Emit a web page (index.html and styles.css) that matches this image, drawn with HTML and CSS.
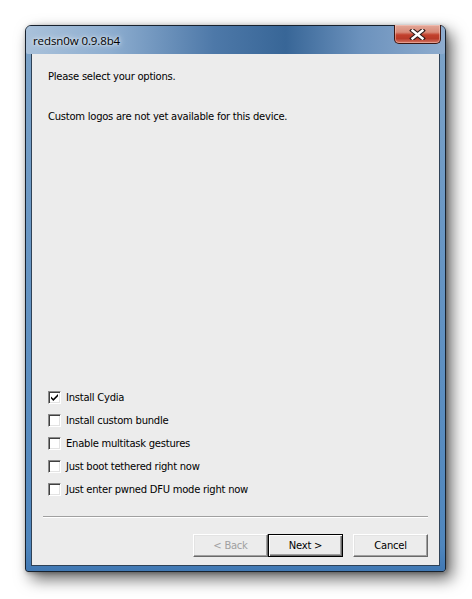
FILE: index.html
```html
<!DOCTYPE html>
<html>
<head>
<meta charset="utf-8">
<title>redsn0w 0.9.8b4</title>
<link rel="stylesheet" href="styles.css">
</head>
<body>
<div class="window">
  <div class="titlebar">
    <span class="title">redsn0w 0.9.8b4</span>
    <div class="close">
      <svg width="17" height="11" viewBox="0 0 17 11">
        <path d="M3.5 1.5 L13.5 9.5 M13.5 1.5 L3.5 9.5" stroke="#2b1a1a" stroke-width="4.6" stroke-linecap="square"/>
        <path d="M3.5 1.5 L13.5 9.5 M13.5 1.5 L3.5 9.5" stroke="#ffffff" stroke-width="2.4" stroke-linecap="square"/>
      </svg>
    </div>
  </div>
  <div class="client">
    <p class="line first">Please select your options.</p>
    <p class="line second">Custom logos are not yet available for this device.</p>
    <div class="spacer"></div>
    <ul class="options">
      <li class="option"><span class="box checked"><svg width="9" height="9" viewBox="0 0 9 9"><path d="M1 3.5 L3.3 5.8 L8 1.1 L8 3.2 L3.3 7.9 L1 5.6 Z" fill="#000"/></svg></span>Install Cydia</li>
      <li class="option"><span class="box"></span>Install custom bundle</li>
      <li class="option"><span class="box"></span>Enable multitask gestures</li>
      <li class="option"><span class="box"></span>Just boot tethered right now</li>
      <li class="option"><span class="box"></span>Just enter pwned DFU mode right now</li>
    </ul>
    <div class="separator"></div>
    <div class="buttons">
      <button class="btn disabled">&lt; Back</button>
      <button class="btn default">Next &gt;</button>
      <button class="btn cancel">Cancel</button>
    </div>
  </div>
</div>
</body>
</html>
```
FILE: styles.css
```css
html, body {
  margin: 0;
  padding: 0;
  background: #ffffff;
}
body {
  width: 472px;
  height: 599px;
  overflow: hidden;
}
.window {
  margin: 25px 0 0 25px;
  width: 421px;
  height: 547px;
  box-sizing: border-box;
  border: 1px solid #18222e;
  border-radius: 6px 6px 3px 3px;
  background: linear-gradient(180deg, #7ea4c8 0px, #6a97c4 200px, #4f86bd 520px, #3f77b3 547px);
  box-shadow: 6px 7px 16px rgba(0,0,0,0.6), 1px 1px 4px rgba(0,0,0,0.3);
  padding: 0 5px 5px 5px;
  display: flex;
  flex-direction: column;
  position: relative;
}
.window::before {
  content: "";
  position: absolute;
  inset: 0;
  border-radius: 5px 5px 2px 2px;
  background: linear-gradient(90deg, #a9c1da 0%, #8eaed0 20%, #4d78a8 45%, #386697 62%, #6c92bd 80%, #8eacce 100%);
  height: 28px;
  pointer-events: none;
}
.titlebar {
  position: relative;
  height: 27px;
  display: flex;
  align-items: center;
  justify-content: space-between;
}
.title {
  font-family: "Open Sans", "Noto Sans", sans-serif;
  font-size: 11.5px;
  color: #000;
  margin-left: 2px;
  margin-top: 1px;
  text-shadow: 0 0 6px rgba(255,255,255,0.9), 0 0 3px rgba(255,255,255,0.8);
  letter-spacing: -0.1px;
}
.close {
  align-self: flex-start;
  width: 47px;
  height: 19px;
  margin-right: -1px;
  margin-top: -1px;
  box-sizing: border-box;
  border: 1px solid #3b1612;
  border-top: none;
  border-radius: 0 0 5px 5px;
  background: linear-gradient(180deg, #e3a899 0%, #d88a78 40%, #c2402c 55%, #b83a28 75%, #d47766 100%);
  box-shadow: inset 0 0 0 1px rgba(255,210,200,0.45);
  display: flex;
  align-items: center;
  justify-content: center;
}
.client {
  flex: 1;
  box-sizing: border-box;
  border: 1px solid #2f4257;
  background: #ececec;
  display: flex;
  flex-direction: column;
  padding: 0 11px 8px 11px;
  font-family: "DejaVu Sans", Verdana, sans-serif;
  font-size: 10px;
  letter-spacing: -0.25px;
  color: #000;
}
.line {
  margin: 0;
  padding-left: 5px;
  line-height: 13px;
}
.line.first { margin-top: 16px; }
.line.second { margin-top: 27px; }
.spacer { flex: 1; }
.options {
  list-style: none;
  margin: 0 0 0 5px;
  padding: 0;
  display: flex;
  flex-direction: column;
  gap: 10px;
}
.option {
  display: flex;
  align-items: center;
  height: 13px;
  line-height: 13px;
}
.box {
  width: 13px;
  height: 13px;
  box-sizing: border-box;
  border: 1px solid;
  border-color: #8a8a8a #ffffff #ffffff #8a8a8a;
  background: #ffffff;
  box-shadow: inset 1px 1px 0 #404040, inset -1px -1px 0 #e3e3e3;
  margin-right: 5px;
  display: flex;
  align-items: center;
  justify-content: center;
  flex-shrink: 0;
}
.separator {
  margin-top: 20px;
  height: 1px;
  background: #a0a0a0;
  border-bottom: 1px solid #ffffff;
}
.buttons {
  margin-top: 16px;
  display: flex;
  justify-content: flex-end;
}
.btn {
  width: 75px;
  height: 23px;
  box-sizing: border-box;
  font-family: "DejaVu Sans", Verdana, sans-serif;
  font-size: 10px;
  letter-spacing: -0.25px;
  color: #000;
  background: #ececec;
  border: 1px solid;
  border-color: #ffffff #696969 #696969 #ffffff;
  box-shadow: inset -1px -1px 0 #a0a0a0, inset 1px 1px 0 #e3e3e3;
  padding: 0;
  margin: 0;
}
.btn.disabled {
  color: #a0a0a0;
}
.btn.default {
  border: 1px solid #000;
  box-shadow: inset 1px 1px 0 #ffffff, inset -1px -1px 0 #696969, inset -2px -2px 0 #a0a0a0;
}
.btn.cancel {
  margin-left: 10px;
}
```
